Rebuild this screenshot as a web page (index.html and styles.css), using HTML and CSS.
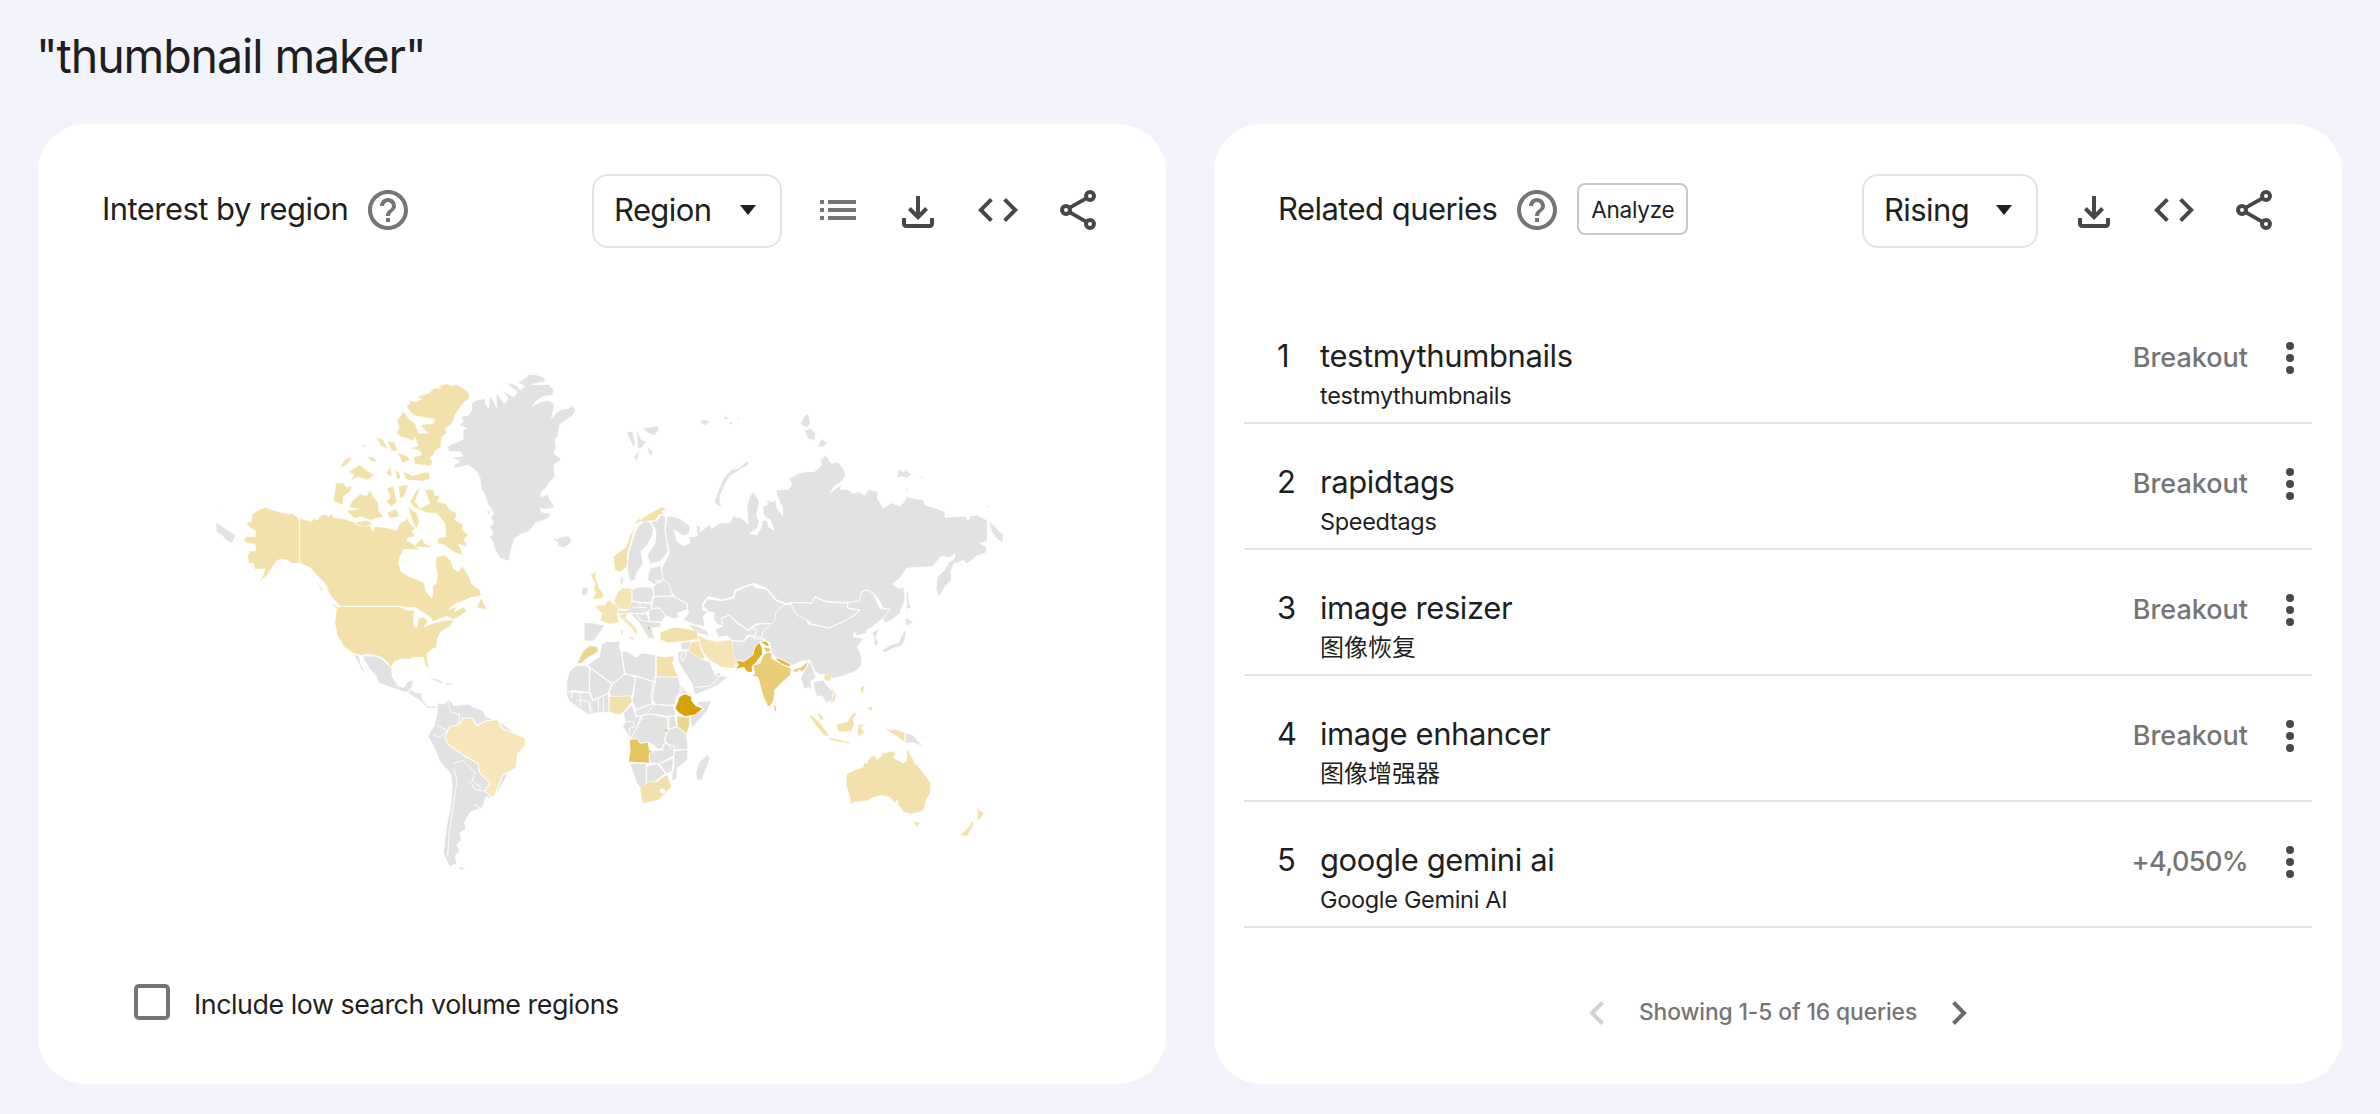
FILE: index.html
```html
<!DOCTYPE html>
<html lang="en">
<head>
<meta charset="utf-8">
<title>"thumbnail maker"</title>
<link rel="stylesheet" href="styles.css">
</head>
<body>
<svg width="0" height="0" class="defs" aria-hidden="true">
  <symbol id="help" viewBox="0 0 24 24"><path d="M11 18h2v-2h-2v2zm1-16C6.48 2 2 6.48 2 12s4.48 10 10 10 10-4.480 10-10S17.520 2 12 2zm0 18c-4.410 0-8-3.590-8-8s3.590-8 8-8 8 3.590 8 8-3.590 8-8 8zm0-14c-2.210 0-4 1.790-4 4h2c0-1.100.9-2 2-2s2 .9 2 2c0 2-3 1.750-3 5h2c0-2.250 3-2.500 3-5 0-2.210-1.790-4-4-4z"/></symbol>
  <symbol id="list" viewBox="0 0 24 24"><path d="M3 7h2v2H3zM7 7h14v2H7zM3 11h2v2H3zM7 11h14v2H7zM3 15h2v2H3zM7 15h14v2H7z"/></symbol>
  <symbol id="download" viewBox="0 0 24 24"><path d="M12 16l-5-5 1.400-1.450 2.600 2.600V4h2v8.150l2.600-2.600L17 11zM6 20q-.825 0-1.412-.587Q4 18.825 4 18v-3h2v3h12v-3h2v3q0 .825-.587 1.413Q18.825 20 18 20z"/></symbol>
  <symbol id="code" viewBox="0 0 24 24"><path d="M9.400 16.600 4.800 12l4.600-4.600L8 6l-6 6 6 6zM14.600 16.600 19.200 12l-4.600-4.600L16 6l6 6-6 6z"/></symbol>
  <symbol id="share" viewBox="0 0 24 24"><path d="M7.500 11.100 16.500 5.900M7.500 12.900 16.500 18.100" stroke="currentColor" stroke-width="1.900"/><g fill="none" stroke="currentColor" stroke-width="2"><circle cx="18" cy="5" r="2"/><circle cx="6" cy="12" r="2"/><circle cx="18" cy="19" r="2"/></g></symbol>
  <symbol id="caret" viewBox="0 0 16 10"><path d="M0 0h16L8 10z"/></symbol>
  <symbol id="more" viewBox="0 0 8 32"><circle cx="4" cy="4" r="4"/><circle cx="4" cy="16" r="4"/><circle cx="4" cy="28" r="4"/></symbol>
</svg>

<h1 class="term">"thumbnail maker"</h1>
<main class="cards">
  <section class="card">
    <header class="head">
      <h2>Interest by region</h2>
      <svg class="icon help"><use href="#help"/></svg>
      <div class="select">Region<svg class="caret"><use href="#caret"/></svg></div>
      <div class="tools">
        <svg class="icon soft"><use href="#list"/></svg>
        <svg class="icon drop"><use href="#download"/></svg>
        <svg class="icon"><use href="#code"/></svg>
        <svg class="icon"><use href="#share"/></svg>
      </div>
    </header>

    <svg class="map" viewBox="38 298 1128 636">
      <!-- Greenland, Iceland -->
      <g transform="translate(400 350) scale(.33333)">
        <path d="M375 85L388 72 410 74 430 82 440 95 425 98 445 105 462 120 460 135 430 140 412 150 398 165 425 152 445 150 468 155 455 180 455 208 465 200 480 180 505 175 515 165 528 180 515 200 498 210 490 225 478 225 475 255 465 270 468 290 462 312 485 325 462 345 465 380 450 400 460 408 425 425 445 440 460 465 478 420 480 430 488 455 490 440 510 405 520 398 530 390 548 350 565 335 590 332 605 325 620 328 632 300 625" fill="none" stroke="none"/>
        <path d="M375 85L388 72 410 74 430 82 440 95 415 98 395 104 445 103 462 120 460 135 430 140 412 150 396 168 425 154 445 152 462 160 462 172 455 205 468 190 480 180 505 175 515 165 528 180 515 200 498 210 478 225 475 255 465 270 468 290 462 312 485 328 462 345 465 380 450 395 440 412 425 425 422 440 445 432 450 450 465 472 440 478 420 476 425 486 455 490 440 508 405 520 398 530 385 546 365 552 345 565 335 590 332 605 328 634 300 625 285 600 278 575 268 562 280 550 268 530 280 520 272 500 282 490 262 460 252 430 245 420 240 385 228 362 205 345 165 355 160 345 180 335 155 322 190 318 180 305 148 305 140 290 165 278 190 268 188 240 200 235 175 225 190 215 182 200 205 195 215 182 215 160 230 150 255 145 258 165 265 175 268 145 274 140 290 172 288 140 290 128 315 162 324 145 305 120 325 132 342 140 352 125 330 110 318 98 335 100 352 108 360 120 374 108 352 98Z"/>
        <path d="M460 562l12 4 12-5 20-4 11 12-6 12-18 12-20-6 4-8-10-6zM258 480l14 4-6 14z"/>
      </g>
      <!-- North America -->
      <g transform="translate(200 360) scale(.33333)">
        <g class="low">
          <path d="M199 441L205 446 240 456 262 463 278 461 292 472 298 478V610L275 609 262 600 240 598 228 604 214 624 206 640 195 652 178 664 190 645 195 626 165 628 160 610 146 610 143 585 150 573 168 573 165 552 138 548 132 540 138 530 165 530 168 514 150 502 138 490 155 484 156 463 178 449Z"/>
          <path d="M300 475L335 486 342 474 352 480 360 468 378 462 384 470 395 462 402 473 432 476 452 484 465 485 462 492 490 498 512 497 518 515 525 500 560 503 590 512 600 490 618 480 622 475 630 492 645 505 636 512 645 530 625 532 620 542 645 555 655 568 610 568 600 590 595 610 603 635 630 652 655 660 672 668 678 695 695 714 700 700 698 680 710 668 713 640 706 618 710 590 735 586 752 602 760 625 775 636 788 618 796 634 808 652 812 668 825 680 840 690 843 707 815 712 790 722 768 730 745 748 770 742 762 756 790 742 800 752 785 765 760 778 740 768 715 778 700 785 690 770 672 758 660 752 645 742 620 742 597 738 H420L405 722 388 700 375 670 345 640 330 622 300 610Z"/>
          <path d="M420 740H597L618 750 645 752 640 770 642 800 652 802 655 775 675 772 682 785 672 802 700 790 735 782 762 780 748 800 722 815 712 835 709 862 695 868 680 882 682 900 688 926 676 915 670 892 640 892 625 898 600 896 583 905 573 920 560 905 545 892 525 885 500 882 485 886 460 880 432 860 412 825 405 790 410 745Z"/>
          <path d="M740 72L755 78 770 74 790 85 806 98 808 115 790 128 775 150 765 165 760 180 752 195 735 205 740 218 725 232 722 262 705 272 700 285 690 292 698 308 690 318 645 312 640 292 665 285 660 272 632 265 655 258 645 230 640 242 622 235 605 232 590 218 598 200 590 182 610 155 630 180 645 190 655 220 685 220 662 195 700 190 706 178 670 172 640 165 618 138 630 130 625 122 650 125 665 118 652 110 690 98 700 85 725 85 715 78Z"/>
          <path d="M612 335l25 12 30-8 20-2 3 20-20 6-45-3-12-8zM528 232l22 8 14 28-20-10zM562 245l20 0 12 28-18 0zM592 278l28 10 10 12-22 8zM480 258l18-6-4 10zM418 325l18-28 22-6-18 24zM445 335l35-20 18 15 25 15-20 15-30-10-20 12 10-18zM558 340l14-20 4 30zM586 330l12 8 4 18-12 0zM500 290l22 2 8 14-16-2z"/>
          <path d="M408 368L430 370 438 380 457 380 452 392 430 410 428 435 400 422ZM448 442L455 425 480 402 500 408 510 390 520 410 535 430 535 450 550 470 530 474 510 480 485 470 462 475 440 452 478 448ZM560 385L580 378 590 425 575 440 560 425 572 410ZM596 378L625 375 612 410 600 415ZM560 458l30-10 6 22-26 4zM630 425L650 390 660 385 645 425 660 445 690 430 675 390 700 388 705 408 720 405 712 425 738 432 750 450 770 460 765 480 790 495 785 508 805 525 792 538 802 560 775 552 788 585 770 580 745 565 735 555 710 550 715 535 738 530 735 490 710 460 680 458 640 440ZM642 560L655 545 668 535 672 550 700 562 672 562ZM625 440l25 20 8 25-10 22-16-40zM460 488l40-6 20 10-30 8zM830 742L845 712 850 730 862 750 845 746ZM392 728l22 14-2 8zM350 660l18 30-4 4z"/>
        </g>
        <path d="M485 888L525 888 545 896 560 910 575 925 577 950 595 978 612 982 622 965 642 960 635 985 625 1000 600 992 570 982 535 968 528 948 508 925ZM460 882L478 888 482 912 498 940 485 930ZM622 998L628 985 640 995 665 1000 668 1020 682 1036 695 1040 708 1036V1046L685 1045 660 1022ZM675 948l40 10 20 10-15 2-20-10zM733 970l22-2 4 6-20 2zM48 485L68 500 92 515 108 525 96 550 80 542 64 525 48 515ZM50 434l8 2-6 4zM100 566l18 5v3z"/>
      </g>
      <!-- South America -->
      <g transform="scale(1.5179)">
        <path stroke-width=".5" d="M288 463L292 464 296 461 299 465 309 464 312 466 318 468 320 472 330 476 347 489 340 500 330 518 325 526 320 525 318 532 310 535 308 538 306 542 307 546 303 549 304 553 301 557 303 560 300 564 301 569 296 571 292 562 294 545 297 530 298 518 297 510 290 502 286 493 282 485 286 478 288 470Z"/>
        <path fill="none" stroke-width=".6" d="M295 462l2 7 6 2-1 6M288 478l8 4 1 8M285 484l5 2 4-4M299 503l6-2 8 8-2 5 6 5M299 506l2 8-2 14-3 20-1 16M309 514l4 6 5 1M312 530l6 3"/>
        <path class="brazil" stroke-width=".7" d="M296 479L303 477 305 473 311 473 314 478 320 475 328 474 331 480 346 486 346 491 341 497 340 506 331 511 328 519 325 526 319 521 323 516 316 509 315 503 306 498 300 494 295 490 293 486Z"/>
        <path class="gray" stroke-width="0" d="M302 571l5 1-3 1z"/>
      </g>
      <!-- Russia and Central Asia -->
      <g transform="translate(640 400) scale(.33333)">
        <path d="M80 352L92 348 120 355 150 378 148 400 130 408 102 390 112 425 132 438 150 428 145 410 172 408 168 375 182 380 180 395 210 372 215 385 240 368 270 368 280 348 305 355 325 372 320 320 330 285 342 275 350 290 358 305 350 345 358 365 352 385 330 400 350 405 362 385 368 360 383 362 385 380 402 390 390 360 370 345 368 320 385 312 372 300 400 305 405 295 412 325 428 347 428 325 410 285 408 270 445 268 455 255 448 235 475 220 500 215 522 215 535 205 545 195 540 182 556 165 575 190 595 185 610 205 618 225 605 245 585 258 570 278 608 250 600 268 625 268 640 280 655 275 675 285 685 268 715 275 712 295 730 325 755 308 780 318 792 305 800 290 850 300 855 315 880 322 915 335 915 352 975 348 985 362 990 348 1010 345 1042 360V425L1018 430 1038 438 1040 458 1010 468 980 492 970 480 952 490 942 490 932 515 935 540 915 560 898 592 888 570 892 530 915 508 925 488 942 475 945 460 930 475 905 468 878 500 840 502 800 505 780 535 758 552 775 565 792 562 795 600 780 640 755 660 735 670 725 652 748 628 730 625 720 605 700 580 680 570 665 575 658 605 625 608 560 605 525 590 515 608 450 608 440 612 410 600 380 565 340 550 285 570 280 590 245 600 205 590 188 610 188 630 205 635 190 650 195 680 165 675 130 660 145 640 140 610 110 600 90 570 65 540 65 505 72 490 88 460 75 395Z"/>
        <path d="M1045 362L1065 378 1078 395 1089 398V430L1068 415 1055 395ZM1036 320l18-6-5 9zM800 565L806 580 808 610 816 628 804 625 798 645ZM222 305L235 270 250 235 275 208 295 205 320 184 330 192 300 210 270 228 255 255 240 290 240 310 252 327 232 315ZM480 72L492 48 505 40 512 70 500 84ZM492 92L512 85 527 100 525 122 505 118ZM533 138L545 115 562 130 550 142ZM770 235L776 205 788 215 800 205 804 216 817 222 800 235 785 230ZM832 226l22 6-10 4zM793 265l14 0-6 10zM178 68l12-10 20 5-14 14zM248 58l12-12 6 14zM262 70l18-8-4 14zM288 55l14-6-6 10z"/>
        <path d="M190 618L202 596 245 602 282 594 287 573 338 553 345 562 380 568 408 602 440 615 430 635 412 640 405 670 345 672 325 690 290 665 268 645 245 655 248 678 230 672 220 655 225 640 205 635Z"/>
        <path d="M225 688L248 678 245 655 268 645 290 668 325 692 340 682 352 692 340 712 322 705 312 724 278 722 262 708 235 712ZM335 682L362 672 405 670 375 692 372 718 340 715 350 695ZM276 722L312 724 330 705 375 715 358 735 330 780 278 800Z"/>
        <path d="M448 610L465 608 515 610 525 592 560 606 625 610 622 624 660 630 640 648 600 670 565 684 515 672 500 658 470 650Z"/>
      </g>
      <!-- Nordics -->
      <g transform="translate(560 400) scale(.33333)">
        <path d="M235 378L255 362 270 366 280 385 278 405 262 435 243 455 250 490 232 515 225 540 210 545 203 515 202 490 206 455 215 430 225 395ZM270 365L290 362 305 345 318 350 315 390 325 455 300 485 270 492 262 465 285 430 288 400 282 380ZM182 530l10 2-4 22-8-4zM199 98l18-6 10 38-6 14zM230 88l14 30 16 8-20 22-8-4zM238 150l-6 38-10-18zM246 85L295 76 298 90 282 108 262 98ZM262 140L275 150 280 168 266 162Z"/>
        <path class="low" d="M160 470L185 450 198 442 208 412 222 385 245 358 262 345 290 330 305 320 322 330 305 332 310 342 295 345 285 362 270 362 240 366 225 382 212 425 203 455 200 500 180 516 165 510ZM226 366l12-10 8 2-18 14z"/>
      </g>
      <!-- South-east Asia and Oceania -->
      <g transform="translate(760 600) scale(.33333)">
        <path d="M8 95L45 60 48 35 72 15 92 12 110 45 140 58 145 72 205 84 245 68 280 48 300 30 262 24 265 8 298 3 305-25 320-30 340-20 360 25 390 28 372 52 340 78 318 92 320 100 290 108 283 95 280 110 312 115 292 140 306 170 305 195 285 215 250 228 220 236 195 225 175 222 165 215 150 180 120 185 95 198 50 175 35 160 30 130 5 112Z"/>
        <path d="M335 98L358 85 348 112 356 128 352 138 342 135 342 112ZM365 152L385 138 400 132 415 128 430 95 440 90 435 120 425 138 400 145 375 158ZM438 52L458 66 445 78 436 72ZM122 235L135 205 150 182 162 215 168 232 152 245 156 272 145 262 132 268ZM160 245L190 240 200 255 220 275 218 300 200 308 185 288 170 290 162 265ZM162 316l14 14-2 4zM436 398L460 405 475 425 492 442 460 428 436 430ZM480 412l22-4-8 6z"/>
        <path d="M303 212l5 12-6-2z"/>
        <g class="low">
          <path d="M190 228L205 222 215 230 210 242 196 242ZM212 255L228 285 226 300 210 312 218 295 222 284ZM172 338L186 344 192 362 180 358ZM304 255l9 6-5 22-6-8zM322 325L337 317 335 334ZM146 344L160 350 185 375 208 408 196 408 170 380ZM205 412L240 420 270 428 268 432 210 420ZM228 375L262 365 275 345 286 335 288 345 280 355 282 375 272 395 236 395ZM295 375L320 370 302 382 314 402 304 400 300 412 293 400ZM374 383L395 390 410 390 434 398V427L415 412 395 400Z"/>
          <path d="M260 522L285 510 308 502 315 488 325 490 322 482 335 470 345 465 350 478 362 472 370 458 380 458 392 453 408 460 398 472 430 490 440 482 440 448 448 458 460 480 465 492 480 505 490 520 512 548 510 580 498 600 490 632 455 642 432 636 415 615 412 598 405 610 390 592 365 586 340 592 320 603 285 606 272 612 270 590 258 555ZM459 664L480 667 470 682ZM650 615l8 16 14 8-12 20-10-3 4-14zM637 662L642 672 622 708 600 706 625 682Z"/>
        </g>
      </g>
      <!-- Europe, Middle East, Africa, South Asia -->
      <g transform="translate(540 580) scale(.33333)">
        <path d="M125 25L145 20 142 45 125 48ZM132 128L155 128 195 136 175 165 158 185 132 182ZM330-35L362-45 370 0 345 15 322 0ZM276 28L300 20 335 22 342 40 335 68 300 68 276 62ZM338 22L350 5 370-2 388 15 398 48 342 50ZM335 68L342 50 398 48 440 70 442 90 410 100 420 112 400 116 378 108 358 84 335 86ZM268 76L276 64 300 68 333 70 335 88 325 94 315 102 275 100 235 102 230 92 262 90ZM325 94L335 86 358 84 378 108 365 125 330 125ZM272 103L320 98 328 125 365 127 360 142 335 144 345 178 325 175 310 150 296 126ZM440 130L475 140 500 150 508 168 470 158ZM422 188L455 182 448 208 424 210Z"/>
        <path d="M184 192L200 185 242 183 238 200 245 218 255 282 218 312 140 255 178 230ZM245 216L255 212 275 222 290 232 305 218 347 225V308L290 288 253 282ZM80 305L88 275 105 258 135 255 150 264 148 338 100 332 80 338ZM148 262L218 313 205 340 160 362 148 338ZM216 312L258 281 287 293 277 348 215 350 205 338ZM286 288L345 306 335 372 290 390 276 365 280 345ZM343 290L414 292 428 330 410 347 405 374 380 378 345 372 333 350ZM78 335L150 338 158 362 205 340 208 398 180 398 145 404 110 380 85 360ZM288 388L335 372 400 376 408 406 380 412 330 402 285 410ZM452 350L468 365 515 362 500 395 455 445 450 410 492 386ZM383 410L405 406 410 440 385 448ZM302 408L330 402 365 406 387 412 384 445 375 470 378 490 360 512 330 488 300 492 272 475 290 445ZM250 400L275 375 288 405 306 412 292 440 272 476 248 440 255 425ZM383 448L412 440 440 463 444 508 400 512 373 482ZM328 513L368 508 372 488 404 500 402 527 358 552 328 548ZM403 510L444 508 442 540 412 565 410 598 395 602 398 560ZM358 552L402 533 400 572 380 582ZM270 550L320 550V605L305 628 290 610ZM318 558L352 551 377 580 345 605 320 610ZM505 522L510 538 485 600 470 600 468 575 478 545ZM420 310l20 25 25 20-30-14-15 4zM412 215L445 210 485 238 510 245 525 285 565 290 530 318 465 345 455 310 435 280 415 245ZM428 212l12 2-10 30-8-8z"/>
        <path fill="none" d="M465 322l45-4 15-12 18-22M110 360l30 2 20 38M150 362v42M175 358v40M190 352v46M120 340l2 40M96 328l-2 28M300 68v12M290 100l10 20 30 6M275 84l45-2M335 22l-10-20M345 0l18 8M250 425h30l5 15-16 4v20M360 505l12 8M322 398l22-26"/>
        <g class="low">
          <path class="pale" d="M163 78L195 75 205 60 222 72 238 82 232 98 236 128 210 132 182 122 186 100ZM232 38L245 25 275 25V62L268 88 240 88 228 75 222 62ZM235 105L265 98 256 115 275 130 292 150 290 168 275 145 252 122ZM263 172l22 0-6 8zM242 150h7v14h-6zM475 165L500 178 530 185 575 180 580 215 587 265 545 262 530 252 510 242 492 220 480 195Z"/>
          <path d="M152-14L168-26 166-5 178 25 192 45 186 55 158 58 168 38 160 28 166 10ZM360 158L390 145 410 142 470 152 475 178 420 185 385 188 362 180ZM455 186L476 183 480 205 496 235 485 238 445 212ZM350 228L378 232 400 228 402 245 395 245 414 290H350ZM208 350L272 348 276 365 250 395 235 405 208 395ZM525 283l16-6-2 12zM300 625L325 605 350 605 382 583 394 620 355 660 308 670Z"/>
        </g>
        <path class="mid" d="M110 252L128 215 150 195 172 200 176 215 145 232 125 250ZM410 408L450 412 448 440 440 462 412 440Z"/>
        <path fill="#fff" d="M358 632l10-6 8 6-8 10z"/>
        <path class="angola" d="M268 478L292 476 300 490 325 486 328 510 338 514 328 520V550L265 546 270 515Z"/>
        <path class="ethiopia" d="M418 350L435 341 455 350 455 362 468 378 490 385 465 405 435 410 418 400 405 385Z"/>
        <path class="india" d="M682 215L697 220 695 235 710 244 732 256 754 265 752 285 730 304 704 330 702 360 690 380 682 378 668 345 656 300 652 290 636 290 644 280 638 256 660 250 668 228ZM760 268L785 260 804 242 802 258 788 275 778 270 765 280ZM700 376L707 376 711 392 704 396Z"/>
        <path class="pakistan" d="M587 240L612 244 638 225 645 200 658 188 666 200 668 222 645 252 637 258 637 278 620 276 612 262 585 268 595 254ZM660 185l16-2 14 12-10 4z"/>
        <path class="india" d="M668 200l22 4 4 10-16 4z"/>
        <path class="nepal" d="M704 236L715 234 752 252 750 262 725 252Z"/>
        <path class="pakistan" d="M320 142l12-2-4 10zM374 448h8v6h-8z" stroke-width="1"/>
      </g>
    </svg>

    <label class="check"><span class="box"></span><span class="label">Include low search volume regions</span></label>
  </section>

  <section class="card">
    <header class="head">
      <h2>Related queries</h2>
      <svg class="icon help"><use href="#help"/></svg>
      <button class="analyze">Analyze</button>
      <div class="select rising">Rising<svg class="caret"><use href="#caret"/></svg></div>
      <div class="tools">
        <svg class="icon drop"><use href="#download"/></svg>
        <svg class="icon"><use href="#code"/></svg>
        <svg class="icon"><use href="#share"/></svg>
      </div>
    </header>
    <ol class="queries">
      <li><span class="rank">1</span><div class="query">testmythumbnails<small>testmythumbnails</small></div><b>Breakout</b><svg class="more"><use href="#more"/></svg></li>
      <li><span class="rank">2</span><div class="query">rapidtags<small>Speedtags</small></div><b>Breakout</b><svg class="more"><use href="#more"/></svg></li>
      <li><span class="rank">3</span><div class="query">image resizer<small lang="zh">图像恢复</small></div><b>Breakout</b><svg class="more"><use href="#more"/></svg></li>
      <li><span class="rank">4</span><div class="query">image enhancer<small lang="zh">图像增强器</small></div><b>Breakout</b><svg class="more"><use href="#more"/></svg></li>
      <li><span class="rank">5</span><div class="query">google gemini ai<small>Google Gemini AI</small></div><b class="pct">+4,050%</b><svg class="more"><use href="#more"/></svg></li>
    </ol>
    <nav class="pager">
      <svg class="prev" viewBox="0 0 15 24"><path d="M13.500 1.500 3 12l10.500 10.500"/></svg>
      <span>Showing 1-5 of 16 queries</span>
      <svg viewBox="0 0 15 24"><path d="M1.500 1.500 12 12 1.500 22.500"/></svg>
    </nav>
  </section>
</main>
</body>
</html>
```
FILE: styles.css
```css
* { box-sizing: border-box; }
body {
  margin: 0;
  padding: 26px 38px 0;
  height: 1114px;
  overflow: hidden;
  background: #f2f3fb;
  color: #1f1f1f;
  font-family: Inter, "Noto Sans CJK SC", sans-serif;
  font-size: 31px;
  letter-spacing: -.4px;
}
.defs { position: absolute; }
h1, h2, ol { margin: 0; padding: 0; font-weight: 400; }
svg { display: block; flex: none; }
.term { font-size: 46.500px; line-height: 60px; letter-spacing: -1.080px; margin: 0 0 38px -2px; }
.cards { display: grid; grid-template-columns: 1128px 1128px; gap: 48px; }
.card { height: 960px; padding-top: 50px; border-radius: 48px; background: #fff; }

.head { display: flex; align-items: center; height: 74px; padding: 0 48px 0 64px; }
.head h2 { font-size: 31px; line-height: 40px; letter-spacing: -.55px; margin-bottom: 4px; }
.icon { width: 48px; height: 48px; color: #474747; fill: currentColor; margin-bottom: 2px; }
.icon.help { color: #757575; margin-left: 16px; }
.icon.soft { color: #757575; }
.icon.drop { position: relative; top: 2px; }
.select {
  display: flex; align-items: center; justify-content: space-between;
  width: 190px; height: 74px; margin-left: auto; padding: 0 24px 4px 20px;
  border: 2px solid #e3e3e3; border-radius: 16px; color: #1f1f1f; letter-spacing: -.6px;
}
.select.rising { width: 176px; }
.caret { width: 16px; height: 10px; fill: #1f1f1f; position: relative; top: 1px; }
.tools { display: flex; gap: 32px; margin-left: 32px; padding-right: 16px; }
.analyze {
  width: 111px; height: 52px; margin: 0 0 4px 16px; padding: 0;
  border: 2px solid #c9c9c9; border-radius: 8px; background: #fff;
  color: #1f1f1f; font: 400 22.600px Inter, sans-serif; letter-spacing: -.3px;
}

.map { width: 1128px; height: 636px; margin-top: 50px; fill: #e2e2e2; stroke: #fff; stroke-width: 2.800; stroke-linejoin: round; }
.low { fill: #f2e1aa; stroke-width: 1.200; }
.pale { fill: #f6e5b4; }
.brazil { fill: #f8e6bb; }
.mid { fill: #ecd68e; }
.angola { fill: #e6c45f; }
.india { fill: #e8cc76; }
.pakistan { fill: #dcae27; }
.nepal { fill: #e0b84a; }
.ethiopia { fill: #d5a105; }

.check { display: flex; align-items: center; height: 40px; margin: 48px 0 0 96px; font-size: 26.800px; letter-spacing: -.43px; }
.box { width: 36px; height: 36px; margin-right: 24px; border: 4px solid #757575; border-radius: 5px; }
.label { padding-top: 4px; }

.queries { list-style: none; margin: 50px 30px 0; }
.queries li { display: flex; height: 126px; padding: 38px 0 0 33px; border-bottom: 2px solid #e3e3e3; line-height: 40px; }
.rank { width: 43px; }
.query { flex: 1; }
.query small { display: block; font-size: 23.500px; letter-spacing: -.32px; }
.query small:lang(zh) { font-size: 24px; letter-spacing: 0; }
.queries b { font-weight: 500; font-size: 27px; letter-spacing: 0; color: #757575; margin: 2px 38px 0 0; }
.queries .pct { letter-spacing: -.6px; }
.more { width: 8px; height: 32px; margin: 6px 18px 0 0; fill: #474747; }

.pager { display: flex; align-items: center; justify-content: center; gap: 35px; height: 40px; margin-top: 65px; font-size: 22.800px; font-weight: 500; letter-spacing: -.1px; line-height: 38px; color: #757575; }
.pager span { margin-bottom: 2px; }
.pager svg { width: 15px; height: 24px; fill: none; stroke: #6b6b6b; stroke-width: 4; }
.pager .prev { stroke: #d0d0d0; }
```
